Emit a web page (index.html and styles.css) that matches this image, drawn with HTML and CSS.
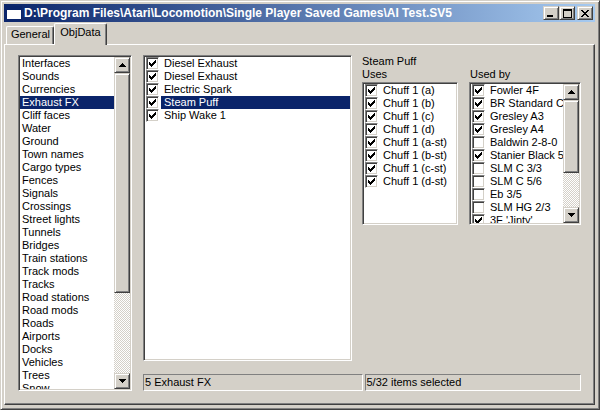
FILE: index.html
```html
<!DOCTYPE html>
<html>
<head>
<meta charset="utf-8">
<link rel="stylesheet" href="styles.css">
</head>
<body>
<div class="window">
  <div class="titlebar">
    <svg class="app-icon" width="16" height="14" viewBox="0 0 16 14" shape-rendering="crispEdges">
      <rect x="0.5" y="0.5" width="15" height="13" fill="#fff" stroke="#0A246A"/>
      <rect x="1" y="1" width="14" height="3" fill="#0A246A"/>
      <rect x="2" y="5" width="12" height="7" fill="#fff"/>
    </svg>
    <span class="title">D:\Program Files\Atari\Locomotion\Single Player Saved Games\AI Test.SV5</span>
    <div class="caption-buttons">
      <div class="cap-btn raised">
        <svg width="8" height="7" viewBox="0 0 8 7" shape-rendering="crispEdges"><rect x="0" y="5" width="6" height="2" fill="#000"/></svg>
      </div>
      <div class="cap-btn raised">
        <svg width="9" height="9" viewBox="0 0 9 9" shape-rendering="crispEdges"><path d="M0 0h9v9H0z M1 2v6h7V2z" fill="#000" fill-rule="evenodd"/></svg>
      </div>
      <div class="cap-btn raised close">
        <svg width="8" height="7" viewBox="0 0 8 7" shape-rendering="crispEdges"><path d="M0 0h2v1h1v1h2V1h1V0h2v1H7v1H6v1H5v1h1v1h1v1h1v1H6V6H5V5H3v1H2v1H0V6h1V5h1V4h1V3H2V2H1V1H0z" fill="#000"/></svg>
      </div>
    </div>
  </div>

  <div class="tabs">
    <div class="tab tab-general">General</div>
    <div class="tab tab-active">ObjData</div>
  </div>

  <div class="panel">
    <div class="layout">
      <div class="listbox sunken list-types">
        <div class="list-items">
          <div class="row">Interfaces</div>
          <div class="row">Sounds</div>
          <div class="row">Currencies</div>
          <div class="row sel">Exhaust FX</div>
          <div class="row">Cliff faces</div>
          <div class="row">Water</div>
          <div class="row">Ground</div>
          <div class="row">Town names</div>
          <div class="row">Cargo types</div>
          <div class="row">Fences</div>
          <div class="row">Signals</div>
          <div class="row">Crossings</div>
          <div class="row">Street lights</div>
          <div class="row">Tunnels</div>
          <div class="row">Bridges</div>
          <div class="row">Train stations</div>
          <div class="row">Track mods</div>
          <div class="row">Tracks</div>
          <div class="row">Road stations</div>
          <div class="row">Road mods</div>
          <div class="row">Roads</div>
          <div class="row">Airports</div>
          <div class="row">Docks</div>
          <div class="row">Vehicles</div>
          <div class="row">Trees</div>
          <div class="row">Snow</div>
        </div>
        <div class="vscroll">
          <div class="sb-btn raised"><svg width="7" height="4" viewBox="0 0 7 4" shape-rendering="crispEdges"><path d="M3 0h1v1h1v1h1v1h1v1H0V3h1V2h1V1h1z"/></svg></div>
          <div class="sb-thumb raised thumb-types"></div>
          <div class="sb-track"></div>
          <div class="sb-btn raised"><svg width="7" height="4" viewBox="0 0 7 4" shape-rendering="crispEdges"><path d="M0 0h7v1H6v1H5v1H4v1H3V3H2V2H1V1H0z"/></svg></div>
        </div>
      </div>

      <div class="listbox sunken list-objects">
        <div class="list-items">
          <div class="crow"><span class="cb on"></span><span class="lbl">Diesel Exhaust</span></div>
          <div class="crow"><span class="cb on"></span><span class="lbl">Diesel Exhaust</span></div>
          <div class="crow"><span class="cb on"></span><span class="lbl">Electric Spark</span></div>
          <div class="crow"><span class="cb on"></span><span class="lbl sel">Steam Puff</span></div>
          <div class="crow"><span class="cb on"></span><span class="lbl">Ship Wake 1</span></div>
        </div>
      </div>

      <div class="details">
        <div class="label">Steam Puff</div>
        <div class="pair">
          <div class="col-uses">
            <div class="label">Uses</div>
            <div class="listbox sunken list-small">
              <div class="list-items">
                <div class="crow"><span class="cb on"></span><span class="lbl">Chuff 1 (a)</span></div>
                <div class="crow"><span class="cb on"></span><span class="lbl">Chuff 1 (b)</span></div>
                <div class="crow"><span class="cb on"></span><span class="lbl">Chuff 1 (c)</span></div>
                <div class="crow"><span class="cb on"></span><span class="lbl">Chuff 1 (d)</span></div>
                <div class="crow"><span class="cb on"></span><span class="lbl">Chuff 1 (a-st)</span></div>
                <div class="crow"><span class="cb on"></span><span class="lbl">Chuff 1 (b-st)</span></div>
                <div class="crow"><span class="cb on"></span><span class="lbl">Chuff 1 (c-st)</span></div>
                <div class="crow"><span class="cb on"></span><span class="lbl">Chuff 1 (d-st)</span></div>
              </div>
            </div>
          </div>
          <div class="col-usedby">
            <div class="label label-usedby">Used by</div>
            <div class="listbox sunken list-small">
              <div class="list-items">
                <div class="crow"><span class="cb on"></span><span class="lbl">Fowler 4F</span></div>
                <div class="crow"><span class="cb on"></span><span class="lbl">BR Standard Class 4</span></div>
                <div class="crow"><span class="cb on"></span><span class="lbl">Gresley A3</span></div>
                <div class="crow"><span class="cb on"></span><span class="lbl">Gresley A4</span></div>
                <div class="crow"><span class="cb"></span><span class="lbl">Baldwin 2-8-0</span></div>
                <div class="crow"><span class="cb on"></span><span class="lbl">Stanier Black 5</span></div>
                <div class="crow"><span class="cb"></span><span class="lbl">SLM C 3/3</span></div>
                <div class="crow"><span class="cb"></span><span class="lbl">SLM C 5/6</span></div>
                <div class="crow"><span class="cb"></span><span class="lbl">Eb 3/5</span></div>
                <div class="crow"><span class="cb"></span><span class="lbl">SLM HG 2/3</span></div>
                <div class="crow"><span class="cb on"></span><span class="lbl">3F 'Jinty'</span></div>
              </div>
              <div class="vscroll">
                <div class="sb-btn raised"><svg width="7" height="4" viewBox="0 0 7 4" shape-rendering="crispEdges"><path d="M3 0h1v1h1v1h1v1h1v1H0V3h1V2h1V1h1z"/></svg></div>
                <div class="sb-thumb raised thumb-usedby"></div>
                <div class="sb-track"></div>
                <div class="sb-btn raised"><svg width="7" height="4" viewBox="0 0 7 4" shape-rendering="crispEdges"><path d="M0 0h7v1H6v1H5v1H4v1H3V3H2V2H1V1H0z"/></svg></div>
              </div>
            </div>
          </div>
        </div>
      </div>

      <div class="statusbar">
        <div class="status status-left">5 Exhaust FX</div>
        <div class="status status-right">5/32 items selected</div>
      </div>
    </div>
  </div>
</div>
</body>
</html>
```

FILE: styles.css
```css
* { box-sizing: border-box; }
html, body { margin: 0; padding: 0; }
body {
  background: #D4D0C8;
  font-family: "Liberation Sans", Arial, sans-serif;
  font-size: 11px;
  color: #000;
}
.window {
  width: 600px;
  height: 410px;
  padding: 3px 4px 4px 3px;
  background: #D4D0C8;
  border: 1px solid;
  border-color: #D4D0C8 #404040 #404040 #D4D0C8;
  box-shadow: inset 1px 1px #fff, inset -1px -1px #808080;
  display: flex;
  flex-direction: column;
  overflow: hidden;
}
.titlebar {
  height: 18px;
  flex: none;
  display: flex;
  align-items: center;
  padding: 0 2px;
  background: linear-gradient(to right, #0A246A, #A6CAF0);
  color: #fff;
}
.app-icon { flex: none; display: block; }
.title {
  margin-left: 2px;
  font-weight: bold;
  font-size: 12px;
  white-space: nowrap;
  flex: 1;
}
.caption-buttons { display: flex; flex: none; }
.cap-btn {
  width: 16px;
  height: 14px;
  display: flex;
  align-items: center;
  justify-content: center;
}
.cap-btn svg { display: block; }
.cap-btn.close { margin-left: 2px; }
.raised {
  background: #D4D0C8;
  border: 1px solid;
  border-color: #D4D0C8 #404040 #404040 #D4D0C8;
  box-shadow: inset 1px 1px #fff, inset -1px -1px #808080;
}
.tabs {
  height: 22px;
  flex: none;
  display: flex;
  align-items: flex-end;
  padding-left: 2px;
}
.tab {
  border: 1px solid;
  border-color: #fff #404040 transparent #fff;
  border-bottom: none;
  box-shadow: inset -1px 0 #808080;
  border-radius: 2px 2px 0 0;
  text-align: center;
  line-height: 13px;
  background: #D4D0C8;
}
.tab-general {
  width: 48px;
  height: 18px;
  padding-top: 1px;
  padding-left: 1px;
}
.tab-active {
  width: 53px;
  height: 22px;
  padding-top: 2px;
  margin-bottom: -1px;
  position: relative;
  z-index: 1;
}
.panel {
  flex: 1;
  border: 1px solid;
  border-color: #fff #404040 #404040 #fff;
  box-shadow: inset -1px -1px #808080;
  padding: 10px 0 0 13px;
}
.layout {
  display: grid;
  grid-template-columns: 115px 209px 219px;
  grid-template-rows: 306px 17px;
  column-gap: 10px;
  row-gap: 13px;
}
.sunken {
  background: #fff;
  border: 1px solid;
  border-color: #808080 #fff #fff #808080;
  box-shadow: inset 1px 1px #404040, inset -1px -1px #D4D0C8;
  padding: 1px;
}
.listbox {
  display: flex;
  overflow: hidden;
}
.list-items {
  flex: 1;
  min-width: 0;
  overflow: hidden;
}
.list-types {
  grid-row: 1 / 3;
  width: 114px;
}
.list-objects { grid-column: 2; grid-row: 1; }
.row {
  height: 13px;
  line-height: 13px;
  padding-left: 2px;
  white-space: nowrap;
}
.row.sel, .lbl.sel { background: #0A246A; color: #fff; }
.crow {
  display: flex;
  align-items: center;
  height: 13px;
  white-space: nowrap;
}
.cb {
  flex: none;
  width: 13px;
  height: 13px;
  margin-left: 1px;
  background: #fff;
  border: 1px solid;
  border-color: #808080 #fff #fff #808080;
  box-shadow: inset 1px 1px #404040, inset -1px -1px #D4D0C8;
}
.cb.on {
  background-image: url("data:image/svg+xml;utf8,<svg xmlns='http://www.w3.org/2000/svg' width='7' height='7' viewBox='0 0 7 7' shape-rendering='crispEdges'><path d='M0 2h1v3H0z M1 3h1v3H1z M2 4h1v3H2z M3 3h1v3H3z M4 2h1v3H4z M5 1h1v3H5z M6 0h1v3H6z' fill='black'/></svg>");
  background-repeat: no-repeat;
  background-position: 2px 2px;
}
.lbl {
  flex: 1;
  margin-left: 2px;
  padding-left: 3px;
  height: 13px;
  line-height: 13px;
  overflow: hidden;
}
.vscroll {
  flex: none;
  width: 16px;
  display: flex;
  flex-direction: column;
}
.sb-btn {
  height: 16px;
  flex: none;
  display: flex;
  align-items: center;
  justify-content: center;
}
.sb-btn svg { display: block; }
.sb-thumb { flex: none; }
.thumb-types { height: 220px; }
.thumb-usedby { height: 73px; }
.sb-track {
  flex: 1;
  background-color: #fff;
  background-image: conic-gradient(#D4D0C8 25%, #fff 0 50%, #D4D0C8 0 75%, #fff 0);
  background-size: 2px 2px;
}
.details {
  grid-column: 3;
  grid-row: 1;
  display: flex;
  flex-direction: column;
}
.label {
  height: 13px;
  line-height: 13px;
  white-space: nowrap;
}
.label-usedby { padding-left: 1px; }
.pair { display: flex; gap: 11px; }
.col-uses { width: 96px; }
.col-usedby { width: 112px; }
.list-small {
  height: 143px;
  margin-top: 1px;
}
.statusbar {
  grid-column: 2 / 4;
  grid-row: 2;
  display: flex;
  gap: 2px;
}
.status {
  height: 17px;
  line-height: 15px;
  border: 1px solid;
  border-color: #808080 #fff #fff #808080;
  padding-left: 1px;
  white-space: nowrap;
}
.status-left { width: 220px; }
.status-right { width: 217px; }
```
